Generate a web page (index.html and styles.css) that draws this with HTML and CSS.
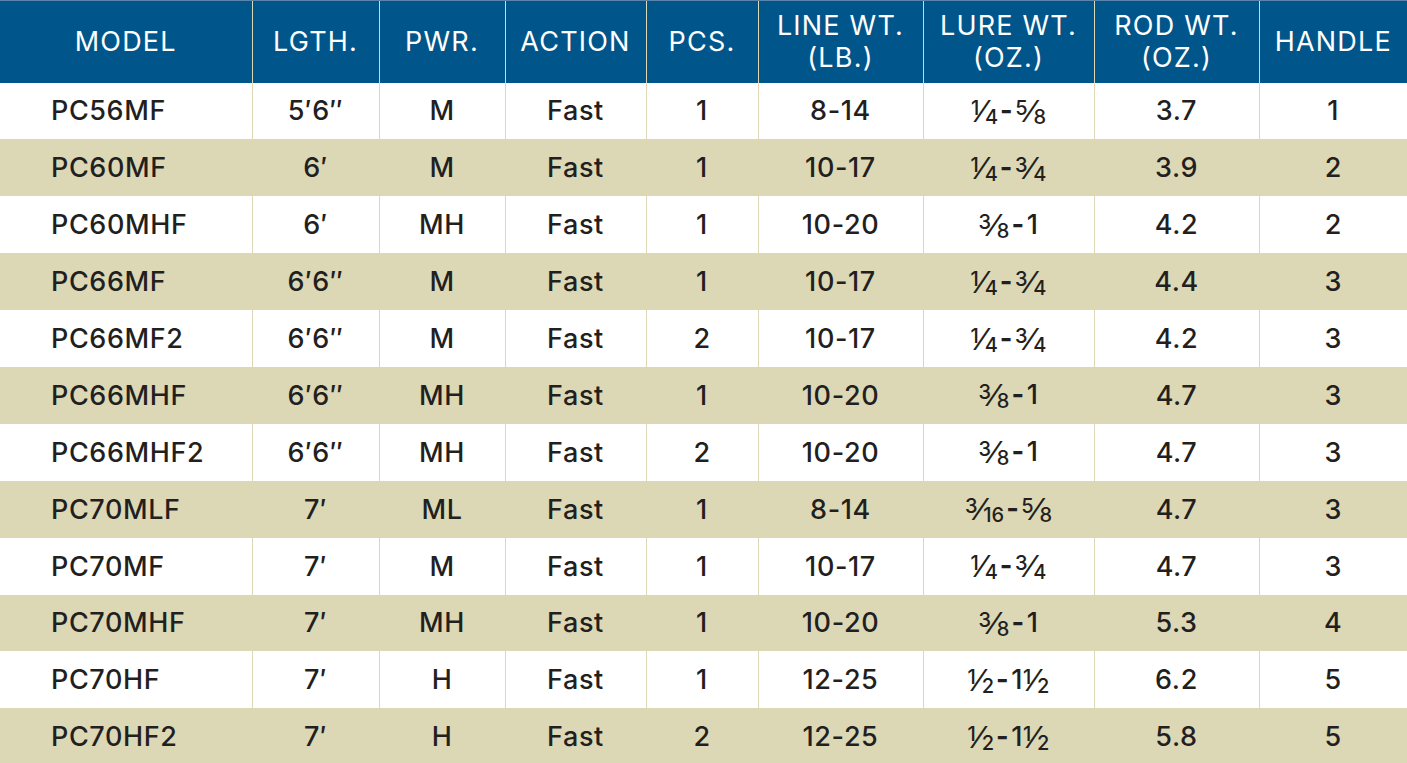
FILE: index.html
```html
<!DOCTYPE html>
<html>
<head>
<meta charset="utf-8">
<link rel="stylesheet" href="styles.css">
</head>
<body>
<table class="spec">
<colgroup>
<col class="c1"><col class="c2"><col class="c3"><col class="c4"><col class="c5"><col class="c6"><col class="c7"><col class="c8"><col class="c9">
</colgroup>
<thead>
<tr><th>MODEL</th><th>LGTH.</th><th>PWR.</th><th>ACTION</th><th>PCS.</th><th>LINE WT.<br>(LB.)</th><th>LURE WT.<br>(OZ.)</th><th>ROD WT.<br>(OZ.)</th><th>HANDLE</th></tr>
</thead>
<tbody>
<tr><td class="model">PC56MF</td><td>5′6″</td><td>M</td><td>Fast</td><td>1</td><td>8-14</td><td class="fr"><span class="n">1</span><span class="s">⁄</span><span class="d">4</span><span class="h">-</span><span class="n">5</span><span class="s">⁄</span><span class="d">8</span></td><td>3.7</td><td>1</td></tr>
<tr><td class="model">PC60MF</td><td>6′</td><td>M</td><td>Fast</td><td>1</td><td>10-17</td><td class="fr"><span class="n">1</span><span class="s">⁄</span><span class="d">4</span><span class="h">-</span><span class="n">3</span><span class="s">⁄</span><span class="d">4</span></td><td>3.9</td><td>2</td></tr>
<tr><td class="model">PC60MHF</td><td>6′</td><td>MH</td><td>Fast</td><td>1</td><td>10-20</td><td class="fr"><span class="n">3</span><span class="s">⁄</span><span class="d">8</span><span class="h">-</span>1</td><td>4.2</td><td>2</td></tr>
<tr><td class="model">PC66MF</td><td>6′6″</td><td>M</td><td>Fast</td><td>1</td><td>10-17</td><td class="fr"><span class="n">1</span><span class="s">⁄</span><span class="d">4</span><span class="h">-</span><span class="n">3</span><span class="s">⁄</span><span class="d">4</span></td><td>4.4</td><td>3</td></tr>
<tr><td class="model">PC66MF2</td><td>6′6″</td><td>M</td><td>Fast</td><td>2</td><td>10-17</td><td class="fr"><span class="n">1</span><span class="s">⁄</span><span class="d">4</span><span class="h">-</span><span class="n">3</span><span class="s">⁄</span><span class="d">4</span></td><td>4.2</td><td>3</td></tr>
<tr><td class="model">PC66MHF</td><td>6′6″</td><td>MH</td><td>Fast</td><td>1</td><td>10-20</td><td class="fr"><span class="n">3</span><span class="s">⁄</span><span class="d">8</span><span class="h">-</span>1</td><td>4.7</td><td>3</td></tr>
<tr><td class="model">PC66MHF2</td><td>6′6″</td><td>MH</td><td>Fast</td><td>2</td><td>10-20</td><td class="fr"><span class="n">3</span><span class="s">⁄</span><span class="d">8</span><span class="h">-</span>1</td><td>4.7</td><td>3</td></tr>
<tr><td class="model">PC70MLF</td><td>7′</td><td>ML</td><td>Fast</td><td>1</td><td>8-14</td><td class="fr"><span class="n">3</span><span class="s">⁄</span><span class="d">16</span><span class="h">-</span><span class="n">5</span><span class="s">⁄</span><span class="d">8</span></td><td>4.7</td><td>3</td></tr>
<tr><td class="model">PC70MF</td><td>7′</td><td>M</td><td>Fast</td><td>1</td><td>10-17</td><td class="fr"><span class="n">1</span><span class="s">⁄</span><span class="d">4</span><span class="h">-</span><span class="n">3</span><span class="s">⁄</span><span class="d">4</span></td><td>4.7</td><td>3</td></tr>
<tr><td class="model">PC70MHF</td><td>7′</td><td>MH</td><td>Fast</td><td>1</td><td>10-20</td><td class="fr"><span class="n">3</span><span class="s">⁄</span><span class="d">8</span><span class="h">-</span>1</td><td>5.3</td><td>4</td></tr>
<tr><td class="model">PC70HF</td><td>7′</td><td>H</td><td>Fast</td><td>1</td><td>12-25</td><td class="fr"><span class="n">1</span><span class="s">⁄</span><span class="d">2</span><span class="h">-</span>1<span class="n">1</span><span class="s">⁄</span><span class="d">2</span></td><td>6.2</td><td>5</td></tr>
<tr><td class="model">PC70HF2</td><td>7′</td><td>H</td><td>Fast</td><td>2</td><td>12-25</td><td class="fr"><span class="n">1</span><span class="s">⁄</span><span class="d">2</span><span class="h">-</span>1<span class="n">1</span><span class="s">⁄</span><span class="d">2</span></td><td>5.8</td><td>5</td></tr>
</tbody>
</table>
</body>
</html>
```
FILE: styles.css
```css
html, body {
  margin: 0;
  padding: 0;
  background: #ffffff;
  overflow: hidden;
}
.spec {
  border-collapse: collapse;
  table-layout: fixed;
  width: 1407px;
  font-family: Inter, "Liberation Sans", sans-serif;
  color: #231f20;
}
.c1 { width: 252px; }
.c2 { width: 127px; }
.c3 { width: 126px; }
.c4 { width: 141px; }
.c5 { width: 112px; }
.c6 { width: 165px; }
.c7 { width: 171px; }
.c8 { width: 165px; }
.c9 { width: 148px; }
.spec thead tr {
  height: 82px;
  background: #00568a;
}
.spec th {
  color: #ffffff;
  font-weight: 400;
  font-size: 27px;
  line-height: 32px;
  text-align: center;
  padding: 0;
  border-left: 1px solid #dcd8b5;
  border-top: 1px solid #5a86ab;
  letter-spacing: 1.2px;
}
.spec th:first-child { border-left: none; }
.spec tbody tr {
  height: 56.9px;
}
.spec tbody tr:nth-child(even) {
  background: #dcd8b5;
}
.spec td {
  font-size: 27px;
  font-weight: 500;
  text-align: center;
  padding: 0;
  border-left: 1px solid #dcd8b5;
  letter-spacing: 0.6px;
}
.spec td:first-child { border-left: none; }
.spec td.model {
  text-align: left;
  padding-left: 51px;
}
.fr {
  white-space: nowrap;
}
.fr .n {
  font-size: 20px;
  vertical-align: 5px;
  letter-spacing: 0;
}
.fr .s {
  font-size: 30px;
  font-weight: 400;
  vertical-align: -2px;
  letter-spacing: 0;
}
.fr .d {
  font-size: 20px;
  vertical-align: -4px;
  letter-spacing: 0;
}
.fr .h {
  font-weight: 700;
  margin: 0 2px;
}
```
